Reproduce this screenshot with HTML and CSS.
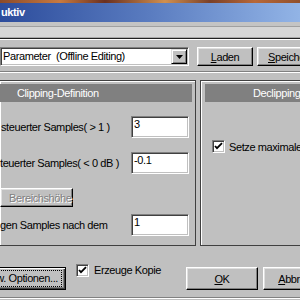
FILE: index.html
```html
<!DOCTYPE html>
<html>
<head>
<meta charset="utf-8">
<link rel="stylesheet" href="styles.css">
</head>
<body>
<div class="desk"></div>
<div class="title">uktiv</div>
<div class="toolbar"></div>
<div class="top">
  <div class="combo-row">
    <div class="combo">
      <span class="combo-text">Parameter&nbsp; (Offline Editing)</span>
      <span class="drop"><svg width="7" height="4" viewBox="0 0 7 4"><path d="M0 0h7L3.5 4z" fill="#000"/></svg></span>
    </div>
    <button class="btn laden"><u>L</u>aden</button>
    <button class="btn speich"><u>S</u>peichern</button>
  </div>
</div>
<div class="sep-white"></div>
<div class="panels">
  <section class="panel left">
    <div class="ph">Clipping-Definition</div>
    <div class="row r1"><span class="lbl l1">steuerter Samples( &gt; 1 )</span><span class="field">3</span></div>
    <div class="row r2"><span class="lbl">teuerter Samples( &lt; 0 dB )</span><span class="field">-0.1</span></div>
    <button class="btn dis">Bereichshöhe</button>
    <div class="row r3"><span class="lbl">gen Samples nach dem</span><span class="field">1</span></div>
  </section>
  <section class="panel right">
    <div class="ph">Declipping</div>
    <div class="chk-row"><span class="chk"><svg width="9" height="9" viewBox="0 0 9 9"><path d="M1 4l2 2.2L8 1.2" stroke="#000" stroke-width="1.8" fill="none"/></svg></span><span class="nw">Setze maximalen</span></div>
  </section>
</div>
<div class="bottom">
  <button class="btn opt"><span class="focus">Erw. Optionen...</span></button>
  <div class="chk-label"><span class="chk"><svg width="9" height="9" viewBox="0 0 9 9"><path d="M1 4l2 2.2L8 1.2" stroke="#000" stroke-width="1.8" fill="none"/></svg></span><span class="nw">Erzeuge Kopie</span></div>
  <button class="btn ok"><u>O</u>K</button>
  <button class="btn abbr"><u>A</u>bbrechen</button>
</div>
<div class="bottom-line"></div>
</body>
</html>
```
FILE: styles.css
```css
html, body { margin: 0; padding: 0; }
body {
  width: 300px;
  height: 300px;
  overflow: hidden;
  background: #c0c0c0;
  font: 11px "Liberation Sans", Arial, sans-serif;
  letter-spacing: -0.4px;
  color: #000;
}
.nw { white-space: nowrap; }
.desk {
  height: 3px;
  background: linear-gradient(to right, #8a4a2a, #c87a40 20%, #6a3020 35%, #d09050 55%, #7a4028 70%, #b86838 85%, #90502c);
}
.title {
  height: 19px;
  line-height: 19px;
  padding-left: 1px;
  background: linear-gradient(to right, #2c4c9c, #5a7cc0 50%, #92b4e6);
  color: #fff;
  font-weight: bold;
}
.toolbar {
  height: 16px;
  background: linear-gradient(to bottom, #c4c4c4 0 4px, #a0a0a0 4px 5px, #d6d6d6 5px 15px, #a8a8a8 15px 16px);
}
.top {
  border-top: 1px solid #202020;
  border-bottom: 1px solid #808080;
  box-shadow: inset 0 1px #fff;
  padding: 8px 0 5px;
}
.combo-row { display: flex; align-items: flex-start; height: 19px; width: 360px; }
.combo {
  box-sizing: border-box;
  width: 189px;
  height: 19px;
  background: #fff;
  border: 1px solid;
  border-color: #808080 #fff #fff #808080;
  box-shadow: inset 1px 1px #404040, inset -1px -1px #c0c0c0;
  display: flex;
  align-items: center;
  justify-content: space-between;
  padding: 1px 1px 1px 2px;
}
.combo-text { line-height: 15px; white-space: nowrap; }
.drop {
  box-sizing: border-box;
  width: 16px;
  height: 15px;
  background: #c0c0c0;
  border: 1px solid;
  border-color: #dfdfdf #000 #000 #dfdfdf;
  box-shadow: inset 1px 1px #fff, inset -1px -1px #808080;
  display: flex;
  align-items: center;
  justify-content: center;
}
.btn {
  box-sizing: border-box;
  font: inherit;
  letter-spacing: inherit;
  color: #000;
  background: #c0c0c0;
  border: 1px solid;
  border-color: #fff #000 #000 #fff;
  box-shadow: inset -1px -1px #808080, inset 1px 1px #dfdfdf;
  padding: 0;
  margin: 0;
  white-space: nowrap;
  flex: none;
}
.laden { margin-left: 8px; width: 56px; height: 19px; }
.speich { margin-left: 4px; width: 76px; height: 19px; text-align: left; padding-left: 10px; }
.sep-white { height: 1px; background: #fff; }
.panels {
  display: flex;
  gap: 4px;
  margin-top: 7px;
  height: 166px;
}
.panel {
  box-sizing: border-box;
  border: 1px solid #404040;
  box-shadow: inset 1px 1px #fff;
}
.left {
  width: 196px;
  flex: none;
  border-left: none;
  padding: 3px 3px 0 0;
}
.right {
  flex: 1;
  min-width: 0;
  border-right: none;
  padding: 3px 0 0 4px;
  overflow: hidden;
}
.ph {
  height: 18px;
  line-height: 18px;
  background: #808080;
  color: #fff;
  white-space: nowrap;
}
.left .ph { padding-left: 17px; }
.right .ph { padding-left: 48px; }
.row {
  display: flex;
  align-items: center;
  justify-content: space-between;
  height: 22px;
}
.r1, .r2 { margin-top: 14px; }
.r3 { margin-top: 7px; }
.lbl { white-space: nowrap; }
.l1 { padding-left: 1px; }
.field {
  box-sizing: border-box;
  width: 58px;
  height: 22px;
  margin-right: 3px;
  background: #fff;
  border: 1px solid;
  border-color: #808080 #fff #fff #808080;
  box-shadow: inset 1px 1px #404040, inset -1px -1px #c0c0c0;
  padding: 1px 0 0 2px;
  line-height: 13px;
}
.dis {
  display: block;
  margin-top: 14px;
  width: 73px;
  height: 19px;
  color: #808080;
  text-shadow: 1px 1px #fff;
  text-align: left;
  padding-left: 8px;
}
.chk-row {
  display: flex;
  align-items: center;
  gap: 4px;
  margin: 38px 0 0 7px;
}
.chk {
  box-sizing: border-box;
  width: 13px;
  height: 13px;
  background: #fff;
  border: 1px solid;
  border-color: #808080 #fff #fff #808080;
  box-shadow: inset 1px 1px #404040, inset -1px -1px #c0c0c0;
  display: flex;
  align-items: center;
  justify-content: center;
  flex: none;
}
.bottom {
  display: flex;
  align-items: flex-start;
  margin-top: 21px;
  height: 23px;
  margin-left: -4px;
  width: 360px;
}
.opt {
  width: 70px;
  height: 23px;
  border: 1px solid #000;
  box-shadow: inset 1px 1px #fff, inset -1px -1px #404040, inset -2px -2px #808080;
  display: flex;
  align-items: center;
  justify-content: flex-end;
  padding-right: 3px;
}
.focus {
  border: 1px dotted #000;
  padding: 1px 3px 1px 0;
  line-height: 13px;
}
.chk-label {
  display: flex;
  align-items: center;
  gap: 5px;
  width: 110px;
  flex: none;
  margin-left: 10px;
  margin-top: -3px;
  line-height: 13px;
}
.ok { width: 72px; height: 23px; }
.abbr { width: 80px; height: 23px; margin-left: 5px; }
.bottom-line {
  margin-top: 7px;
  height: 1px;
  background: #808080;
  box-shadow: 0 1px #fff;
}
```
